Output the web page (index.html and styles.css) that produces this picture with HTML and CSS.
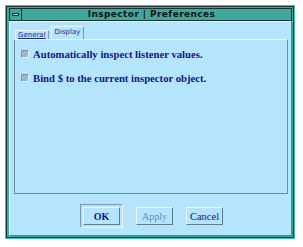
FILE: index.html
```html
<!DOCTYPE html>
<html>
<head>
<meta charset="utf-8">
<link rel="stylesheet" href="styles.css">
</head>
<body>
<div class="window">
  <div class="frame">
    <div class="titlebar">
      <div class="menu-btn"><span class="dash"></span></div>
      <div class="title">Inspector | Preferences</div>
    </div>
    <div class="client">
      <div class="tabs">
        <div class="tab">General</div>
        <div class="tab active">Display</div>
      </div>
      <div class="panel">
        <div class="row"><span class="cb"></span><span class="label">Automatically inspect listener values.</span></div>
        <div class="row"><span class="cb"></span><span class="label">Bind $ to the current inspector object.</span></div>
      </div>
      <div class="buttons">
        <div class="default-ring"><div class="btn">OK</div></div>
        <div class="btn disabled">Apply</div>
        <div class="btn plain">Cancel</div>
      </div>
    </div>
  </div>
</div>
</body>
</html>
```
FILE: styles.css
```css
* { box-sizing: border-box; }
html, body { margin: 0; padding: 0; background: #ffffff; }
body { width: 303px; height: 247px; overflow: hidden; }

.window {
  margin: 5px 0 0 5px;
  width: 290px;
  height: 234px;
  border: 1px solid #3cc4b8;
}
.frame {
  width: 100%;
  height: 100%;
  border: 1px solid #1c3232;
  background: #3fa89e;
  padding: 1px 1px 1px 2px;
  display: flex;
  flex-direction: column;
}
.titlebar {
  height: 13px;
  border: 1px solid #1c3232;
  background: #3fa89e;
  display: flex;
  align-items: stretch;
  flex: none;
}
.menu-btn {
  width: 12px;
  border-right: 1px solid #1c3232;
  display: flex;
  align-items: center;
  justify-content: center;
}
.dash {
  width: 7px;
  height: 3px;
  border: 1px solid #1c3232;
  background: #8fd8cc;
}
.title {
  flex: 1;
  text-align: center;
  font-family: "DejaVu Sans", sans-serif;
  font-weight: bold;
  font-size: 9px;
  line-height: 11px;
  color: #101010;
  letter-spacing: 0.4px;
  padding-right: 10px;
}
.client {
  flex: 1;
  background: #b5e5fc;
  border-top: 1px solid #e8f8ff;
  border-left: 1px solid #e8f8ff;
  border-right: 1px solid #5e7e8c;
  border-bottom: 1px solid #5e7e8c;
  padding: 4px 3px 4px 4px;
  display: flex;
  flex-direction: column;
}
.tabs {
  display: flex;
  align-items: flex-end;
  padding-left: 1px;
  gap: 2px;
  height: 13px;
}
.tab {
  font-family: "DejaVu Sans", sans-serif;
  font-size: 7px;
  color: #1a2a9a;
  height: 9px;
  line-height: 8px;
  padding: 0 2px;
  border-top: 1px solid #e8f8ff;
  border-left: 1px solid #e8f8ff;
  border-right: 1px solid #7a98a8;
  text-decoration: underline;
}
.tab.active {
  height: 13px;
  line-height: 11px;
  padding: 0 3px;
  text-decoration: none;
  background: #b5e5fc;
}
.panel {
  height: 155px;
  border: 1px solid #6f8c9a;
  border-top-color: #e8f8ff;
  padding: 9px 0 0 6px;
  display: flex;
  flex-direction: column;
  gap: 15px;
}
.row {
  display: flex;
  align-items: center;
  height: 9px;
  gap: 4px;
}
.cb {
  width: 8px;
  height: 8px;
  background: #9fb8c4;
  border-top: 1px solid #7c96a2;
  border-left: 1px solid #7c96a2;
  border-right: 1px solid #e0f4fc;
  border-bottom: 1px solid #e0f4fc;
  flex: none;
}
.label {
  font-family: "Liberation Serif", serif;
  font-weight: bold;
  font-size: 10.7px;
  color: #14148c;
  white-space: nowrap;
}
.buttons {
  margin-top: 10px;
  display: flex;
  justify-content: center;
  align-items: center;
  gap: 13px;
  padding-left: 1px;
}
.default-ring {
  padding: 2px;
  border-top: 1px solid #7a98a8;
  border-left: 1px solid #7a98a8;
  border-right: 1px solid #eefaff;
  border-bottom: 1px solid #eefaff;
}
.btn {
  width: 37px;
  height: 18px;
  border-top: 1px solid #eefaff;
  border-left: 1px solid #eefaff;
  border-right: 1px solid #5e7e8c;
  border-bottom: 1px solid #5e7e8c;
  font-family: "Liberation Serif", serif;
  font-weight: bold;
  font-size: 10px;
  color: #14148c;
  display: flex;
  align-items: center;
  justify-content: center;
}
.btn.plain {
  font-weight: normal;
  font-size: 10.5px;
}
.btn.disabled {
  color: #6a88c0;
  font-weight: normal;
}
```
